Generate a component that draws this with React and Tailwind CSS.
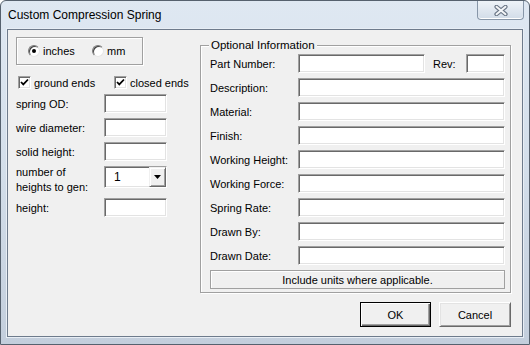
import React from 'react';

const sunken =
  'border border-t-[#a0a0a0] border-l-[#a0a0a0] border-r-white border-b-white shadow-[inset_1px_1px_0_#696969,inset_-1px_-1px_0_#e3e3e3] bg-white';

const etched = 'border border-[#a0a0a0] shadow-[inset_1px_1px_0_#fff,1px_1px_0_#fff]';

function TextBox({ className = '' }) {
  return <div className={`h-[19px] ${sunken} ${className}`} />;
}

function Radio({ checked }) {
  return (
    <span className="flex h-[12px] w-[12px] items-center justify-center rounded-full border border-t-[#7a7a7a] border-l-[#7a7a7a] border-r-[#e6e6e6] border-b-[#e6e6e6] bg-white shadow-[inset_1px_1px_0_#404040]">
      {checked && <span className="h-[4px] w-[4px] rounded-full bg-black" />}
    </span>
  );
}

function Check() {
  return (
    <span className={`flex h-[13px] w-[13px] shrink-0 items-center justify-center ${sunken}`}>
      <svg width="9" height="9" viewBox="0 0 9 9">
        <path d="M1 4 L3.3 6.4 L8 1.5" fill="none" stroke="#000" strokeWidth="1.8" />
      </svg>
    </span>
  );
}

function Field({ label, children }) {
  return (
    <div className="flex h-[19px] items-center">
      <span className="w-[88px] shrink-0">{label}</span>
      {children || <TextBox className="flex-1" />}
    </div>
  );
}

function LeftRow({ label, className = '' }) {
  return (
    <div className={`flex h-[19px] items-center ${className}`}>
      <span className="w-[88px] shrink-0">{label}</span>
      <TextBox className="w-[63px]" />
    </div>
  );
}

export default function App() {
  return (
    <div
      className="flex h-[345px] w-[530px] flex-col overflow-hidden rounded-t-[6px] border border-[#56616e] bg-gradient-to-b from-[#dfe8f2] via-[#d3deea] to-[#c3cedc] text-[11px] leading-[14px] text-black"
      style={{ fontFamily: '"Liberation Sans", Arial, sans-serif' }}
    >
      <div className="flex h-[28px] shrink-0 items-start justify-between">
        <span className="mt-[7px] pl-[7px] text-[12px] leading-[15px]">Custom Compression Spring</span>
        <div className="mr-[5px] flex h-[19px] w-[47px] items-center justify-center rounded-b-[4px] border border-t-0 border-[#8796a8] bg-gradient-to-b from-[#eef3f8] to-[#d2dce8] shadow-[inset_0_-1px_0_#fff]">
          <svg width="14" height="11" viewBox="0 0 14 11">
            <path d="M2.5 1.8 L11.5 9.2 M11.5 1.8 L2.5 9.2" stroke="#6b7787" strokeWidth="4.2" strokeLinecap="round" />
            <path d="M2.5 1.8 L11.5 9.2 M11.5 1.8 L2.5 9.2" stroke="#f4f6f8" strokeWidth="2" strokeLinecap="round" />
          </svg>
        </div>
      </div>

      <div className="mx-[6px] mb-[7px] flex-1 border border-[#6e7b8c] bg-[#f0f0f0] pl-[8px] pr-[11px] pt-[7px] shadow-[0_0_0_1px_#e8eef5]">
        <div className="flex">
          <div className="w-[151px]">
            <div className={`flex h-[28px] w-[127px] items-center pl-[11px] ${etched}`}>
              <label className="flex w-[64px] items-center gap-[3px]">
                <Radio checked />
                <span>inches</span>
              </label>
              <label className="flex items-center gap-[3px]">
                <Radio />
                <span>mm</span>
              </label>
            </div>

            <div className="ml-[2px] mt-[11px] flex h-[13px] items-center whitespace-nowrap">
              <label className="flex w-[96px] shrink-0 items-center gap-[3px]">
                <Check />
                <span>ground ends</span>
              </label>
              <label className="flex shrink-0 items-center gap-[3px]">
                <Check />
                <span>closed ends</span>
              </label>
            </div>

            <LeftRow label="spring OD:" className="mt-[5px]" />
            <LeftRow label="wire diameter:" className="mt-[5px]" />
            <LeftRow label="solid height:" className="mt-[5px]" />

            <div className="mt-[5px] flex h-[22px] items-start">
              <span className="-mt-[1px] w-[88px] shrink-0 leading-[15px]">
                number of
                <br />
                heights to gen:
              </span>
              <div className={`flex h-[22px] w-[63px] items-stretch ${sunken}`}>
                <span className="flex flex-1 items-center pl-[9px] text-[12px]">1</span>
                <span className="flex w-[17px] items-center justify-center border border-t-[#f0f0f0] border-l-[#f0f0f0] border-r-[#696969] border-b-[#696969] bg-[#f0f0f0] shadow-[inset_1px_1px_0_#fff,inset_-1px_-1px_0_#a0a0a0]">
                  <svg width="7" height="4" viewBox="0 0 7 4">
                    <path d="M0 0 H7 L3.5 4 Z" fill="#000" />
                  </svg>
                </span>
              </div>
            </div>

            <LeftRow label="height:" className="mt-[10px]" />
          </div>

          <div className={`ml-[33px] mt-[8px] flex flex-1 flex-col pb-[3px] pl-[9px] pr-[5px] ${etched}`}>
            <span className="-ml-[1px] -mt-[8px] w-fit bg-[#f0f0f0] px-[2px] text-[11.5px]">Optional Information</span>
            <div className="mt-[2px] flex flex-col gap-[5px]">
              <Field label="Part Number:">
                <TextBox className="w-[127px]" />
                <span className="ml-[8px] w-[33px]">Rev:</span>
                <TextBox className="flex-1" />
              </Field>
              <Field label="Description:" />
              <Field label="Material:" />
              <Field label="Finish:" />
              <Field label="Working Height:" />
              <Field label="Working Force:" />
              <Field label="Spring Rate:" />
              <Field label="Drawn By:" />
              <Field label="Drawn Date:" />
              <div className="flex h-[19px] items-center justify-center border border-[#a0a0a0] shadow-[inset_1px_1px_0_#fff]">
                Include units where applicable.
              </div>
            </div>
          </div>
        </div>

        <div className="mt-[9px] flex justify-end gap-[8px]">
          <button className="h-[25px] w-[71px] border border-black bg-[#f0f0f0] shadow-[inset_1px_1px_0_#fff,inset_-1px_-1px_0_#696969,inset_-2px_-2px_0_#a0a0a0]">
            OK
          </button>
          <button className="h-[25px] w-[72px] border border-t-white border-l-white border-r-[#696969] border-b-[#696969] bg-[#f0f0f0] shadow-[inset_1px_1px_0_#e3e3e3,inset_-1px_-1px_0_#a0a0a0]">
            Cancel
          </button>
        </div>
      </div>
    </div>
  );
}
